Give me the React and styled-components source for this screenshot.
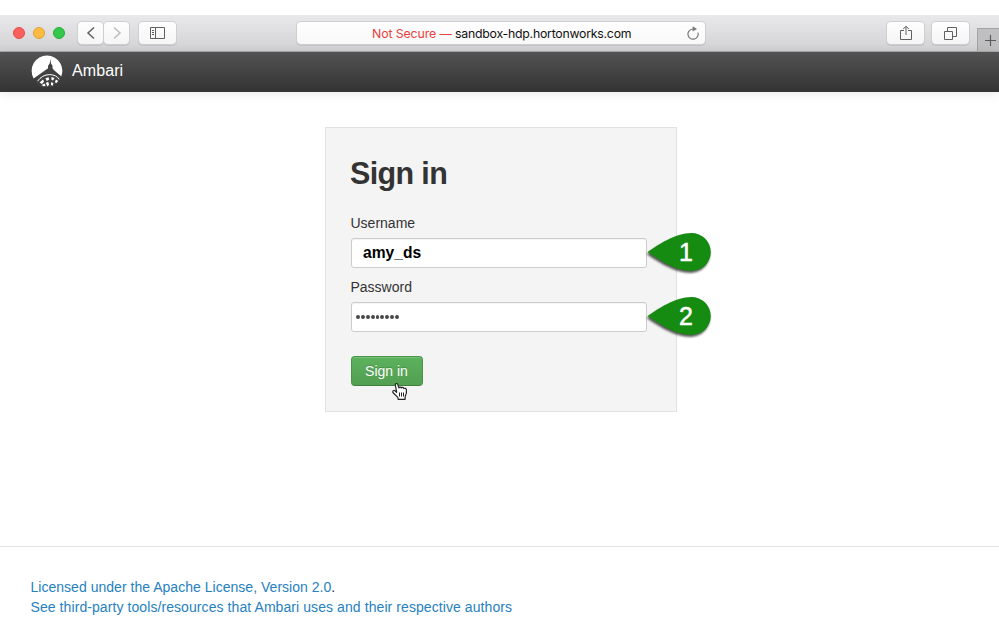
import React from 'react';
import styled, { createGlobalStyle } from 'styled-components';

const GlobalStyle = createGlobalStyle`
  * { box-sizing: border-box; }
  body {
    margin: 0;
    background: #fff;
    color: #333;
    font-family: "Liberation Sans", Arial, sans-serif;
    font-size: 14px;
    line-height: 20px;
    overflow: hidden;
  }
`;

const Page = styled.div`
  display: flex;
  flex-direction: column;
  width: 999px;
  height: 631px;
  padding-top: 15px;
`;

const BrowserBar = styled.header`
  display: flex;
  align-items: flex-start;
  flex: none;
  height: 37px;
  padding: 7px 0 0 13px;
  background: linear-gradient(#e9e8ea, #d2d1d3);
  border-bottom: 1px solid #a9a9a9;
`;

const Lights = styled.div`
  display: flex;
  gap: 8px;
  margin: 5px 13px 0 0;
`;

const Light = styled.span`
  width: 12px;
  height: 12px;
  border-radius: 50%;
  background: ${(p) => p.$fill};
  border: 1px solid ${(p) => p.$edge};
`;

const ToolButton = styled.button`
  display: flex;
  align-items: center;
  justify-content: center;
  flex: none;
  width: ${(p) => p.$width || 37}px;
  height: 22px;
  margin: 0 ${(p) => p.$after || 0}px 0 0;
  padding: 0;
  border: 0;
  border-radius: 4px;
  color: ${(p) => (p.$faded ? '#bcbcbc' : '#606060')};
  background: linear-gradient(#fefefe, #f5f5f5);
  box-shadow: 0 0 0 1px #cfced0, 0 1px 0 1px #c3c2c4;
`;

const AddressBar = styled.div`
  display: flex;
  align-items: center;
  flex: none;
  width: 408px;
  height: 22px;
  margin: 0 182px 0 121px;
  padding: 0 6px 0 75px;
  border-radius: 4px;
  background: linear-gradient(#fefefe, #f8f8f8);
  box-shadow: 0 0 0 1px #cfced0, 0 1px 0 1px #c3c2c4;
  color: #111;
  font: 12.3px/22px Inter, sans-serif;
  white-space: pre;

  span { padding-top: 1px; }
  svg { margin-left: auto; color: #777; }
`;

const Warning = styled.span`
  width: 83px;
  color: #e8403f;
  letter-spacing: -0.1px;
`;

const Host = styled.span`
  letter-spacing: -0.24px;
`;

const NewTab = styled.button`
  display: flex;
  align-items: center;
  justify-content: center;
  flex: none;
  width: 25px;
  height: 23px;
  margin: 6px 0 0 8px;
  padding: 0;
  border: solid #a3a3a4;
  border-width: 1px 0 0 1px;
  background: #bfbec0;
  color: #5c5c5c;
`;

const NavBar = styled.nav`
  display: flex;
  align-items: center;
  flex: none;
  height: 40px;
  padding: 0 31px;
  background: linear-gradient(#535353, #333);
  box-shadow: 0 1px 10px rgba(0, 0, 0, 0.1);
  color: #fff;
  font-size: 16px;
  letter-spacing: 0.1px;

  svg { margin: 0 9px 0 0; }
  span { padding-bottom: 2px; }
`;

const Main = styled.main`
  flex: none;
  height: 454px;
  padding: 35px 0 0 325px;
`;

const Card = styled.div`
  display: flex;
  flex-direction: column;
  align-items: flex-start;
  width: 352px;
  height: 285px;
  padding: 25px 0 0 25px;
  background: #f4f4f4;
  border: 1px solid #e1e1e1;
`;

const Title = styled.h1`
  margin: 0 0 20px -1px;
  color: #333;
  font-size: 30.5px;
  line-height: 40px;
  letter-spacing: -0.65px;
`;

const Label = styled.label`
  height: 25px;
  margin-left: -0.5px;
`;

const FieldRow = styled.div`
  display: flex;
  position: relative;
  margin-bottom: ${(p) => p.$after}px;
`;

const Field = styled.div`
  width: 296px;
  height: 30px;
  padding: 0 ${(p) => p.$inset}px;
  display: flex;
  align-items: center;
  background: #fff;
  border: 1px solid #ccc;
  border-radius: 3px;
  box-shadow: inset 0 1px 1px rgba(0, 0, 0, 0.05);
  color: #000;
  font-size: 15.6px;
  font-weight: bold;
`;

const Dots = styled.div`
  display: flex;
  gap: 1px;
  padding-bottom: 1px;
  i {
    width: 3.9px;
    height: 4px;
    border-radius: 50%;
    background: #484848;
  }
`;

const Marker = styled.div`
  position: absolute;
  left: 296px;
  top: -6px;
  width: 68px;
  height: 44px;
  color: #fff;

  svg { display: block; filter: drop-shadow(-0.5px 2px 1px rgba(0, 0, 0, 0.65)); }
  span {
    position: absolute;
    left: 32px;
    top: 6px;
    font-size: 25px;
    line-height: 28px;
    -webkit-text-stroke: 0.5px #fff;
  }
`;

const SubmitWrap = styled.div`
  position: relative;
`;

const Submit = styled.button`
  display: block;
  width: 72px;
  height: 30px;
  padding: 0 1px 0 0;
  border: 1px solid #4a944a;
  border-bottom-color: #3d803d;
  border-radius: 4px;
  background: linear-gradient(#5cb25c, #529e52);
  box-shadow: inset 0 1px 0 rgba(255, 255, 255, 0.18);
  color: #fff;
  font: 14px/20px "Liberation Sans", Arial, sans-serif;
  text-shadow: 0 -1px 0 rgba(0, 0, 0, 0.2);
`;

const Pointer = styled.svg`
  position: absolute;
  left: 40px;
  top: 26px;
`;

const Footer = styled.footer`
  display: flex;
  flex-direction: column;
  align-items: flex-start;
  flex: 1;
  padding: 30px 30px 0 30.5px;
  border-top: 1px solid #e3e3e3;
`;

const FooterLink = styled.a`
  color: #2681c0;
  white-space: nowrap;
  letter-spacing: ${(p) => p.$track}px;
  b { color: #333; font-weight: normal; }
`;

const Icon = ({ w, h, children, ...rest }) => (
  <svg width={w} height={h} viewBox={`0 0 ${w} ${h}`} fill="none" stroke="currentColor" {...rest}>
    {children}
  </svg>
);

const Logo = () => (
  <svg width="32" height="34" viewBox="0 0 32 34">
    <path d="M16 .5 A15.4 15.4 0 0 1 29.8 22.6 L16 14 L2.6 23.4 A15.4 15.4 0 0 1 16 .5Z" fill="#fff" />
    <path
      d="M19.4 4 L20 8.4 L21.4 10.4 L21.6 13.4 L23.4 15.6 L30.2 21.2 L28.8 24 L22 32 L10 32 L4.6 26.6 L4.8 22.8 L15 16 L16.8 13.4 L17.2 10.4 L18.7 8.4 Z"
      fill="#424242"
    />
    <path d="M6.6 26.2 Q11 19.8 18.6 19.6 Q25.4 19.8 28.2 24.4" fill="none" stroke="#fff" strokeWidth="1" />
    <path
      d="M8.6 27.4 l3.4-2.8 1 1.8 -2 2.6z M14.4 23.2 l3.2-1 .6 2.4 -2.4 1.4z M20.4 22 l3.2 1.1 -1.6 2.5 -1.6-.9z M25 24.4 l2.2 1.6 -2 2.3 -1.3-1.3z M10.6 30 l3-1.4 1 2 -1.6 1z M14.8 28 l2.4-1.2 .9 2.9 -1.7 1.8z M20 27.2 l2.4 .8 -.7 2.7 -1.7-.8z"
      fill="#fff"
    />
  </svg>
);

const Pin = ({ number }) => (
  <Marker>
    <svg width="68" height="44" viewBox="0 0 68 44">
      <path d="M.6 20 C11 13 28 1 44.5 1 A19.3 19 0 0 1 44.5 39 C28 39 10 26.5 .6 20Z" fill="#168b12" />
    </svg>
    <span>{number}</span>
  </Marker>
);

export default function App() {
  return (
    <>
      <GlobalStyle />
      <Page>
        <BrowserBar>
          <Lights>
            <Light $fill="#fc605c" $edge="#e14d4a" />
            <Light $fill="#fdbc40" $edge="#e0a13a" />
            <Light $fill="#34c84a" $edge="#29ac3c" />
          </Lights>
          <ToolButton $width={25} $after={1} aria-label="Back">
            <Icon w={10} h={14} strokeWidth="1.5"><path d="M8 1.5 L2 7 L8 12.5" /></Icon>
          </ToolButton>
          <ToolButton $width={25} $after={10} $faded aria-label="Forward">
            <Icon w={10} h={14} strokeWidth="1.5"><path d="M2 1.5 L8 7 L2 12.5" /></Icon>
          </ToolButton>
          <ToolButton aria-label="Sidebar">
            <Icon w={15} h={12}>
              <path d="M.5 .5h14v11H.5z M5.5 .5v11 M2 3.5h2 M2 5.5h2 M2 7.5h2" />
            </Icon>
          </ToolButton>
          <AddressBar>
            <Warning>Not Secure —</Warning>
            <Host>sandbox-hdp.hortonworks.com</Host>
            <Icon w={12} h={14} strokeWidth="1.2">
              <path d="M10.9 6.6 A5.1 5.1 0 1 1 6.2 3" />
              <path d="M5.6 .2 L10 3 L5.6 5.6Z" fill="currentColor" stroke="none" />
            </Icon>
          </AddressBar>
          <ToolButton $after={8} aria-label="Share">
            <Icon w={12} h={16}>
              <path d="M4 5.5H.5v9h11v-9H8 M6 10V1.5 M3.3 4 L6 1.2 L8.7 4" />
            </Icon>
          </ToolButton>
          <ToolButton aria-label="Tabs">
            <Icon w={13} h={13}>
              <path d="M.5 4.5h8v8h-8z M3.5 4V.5h9v9H9" />
            </Icon>
          </ToolButton>
          <NewTab aria-label="New tab">
            <Icon w={11} h={11} strokeWidth="1.2"><path d="M0 5.5h11 M5.5 0v11" /></Icon>
          </NewTab>
        </BrowserBar>
        <NavBar>
          <Logo />
          <span>Ambari</span>
        </NavBar>
        <Main>
          <Card>
            <Title>Sign in</Title>
            <Label>Username</Label>
            <FieldRow $after={9}>
              <Field $inset={11}>amy_ds</Field>
              <Pin number="1" />
            </FieldRow>
            <Label>Password</Label>
            <FieldRow $after={24}>
              <Field $inset={4}>
                <Dots>{Array.from({ length: 9 }, (_, n) => <i key={n} />)}</Dots>
              </Field>
              <Pin number="2" />
            </FieldRow>
            <SubmitWrap>
              <Submit type="button">Sign in</Submit>
              <Pointer width="18" height="19" viewBox="0 0 18 19">
                <path
                  d="M5.6 9.6 L4.3 3.2 C4 1.3 6.2 .9 6.8 2.6 L8 6 C8.2 4.8 10 4.8 10.4 6 C10.8 5 12.5 5.2 12.9 6.6 C13.6 5.9 15.2 6.3 15.4 7.6 C15.8 9.8 15.5 12 14.2 14.6 L14 17.4 L7.2 17.4 L6.8 15.4 L2.1 10.8 C1 9.2 2.6 7.8 4 8.8 L5.6 10.4Z"
                  fill="#fff" stroke="#222" strokeWidth="1.2" strokeLinejoin="round"
                />
                <path d="M8.5 10.5v4 M10.5 10.5v4 M12.5 10.5v4" stroke="#222" />
              </Pointer>
            </SubmitWrap>
          </Card>
        </Main>
        <Footer>
          <FooterLink $track={0.025}>Licensed under the Apache License, Version 2.0<b>.</b></FooterLink>
          <FooterLink $track={0.08}>See third-party tools/resources that Ambari uses and their respective authors</FooterLink>
        </Footer>
      </Page>
    </>
  );
}
